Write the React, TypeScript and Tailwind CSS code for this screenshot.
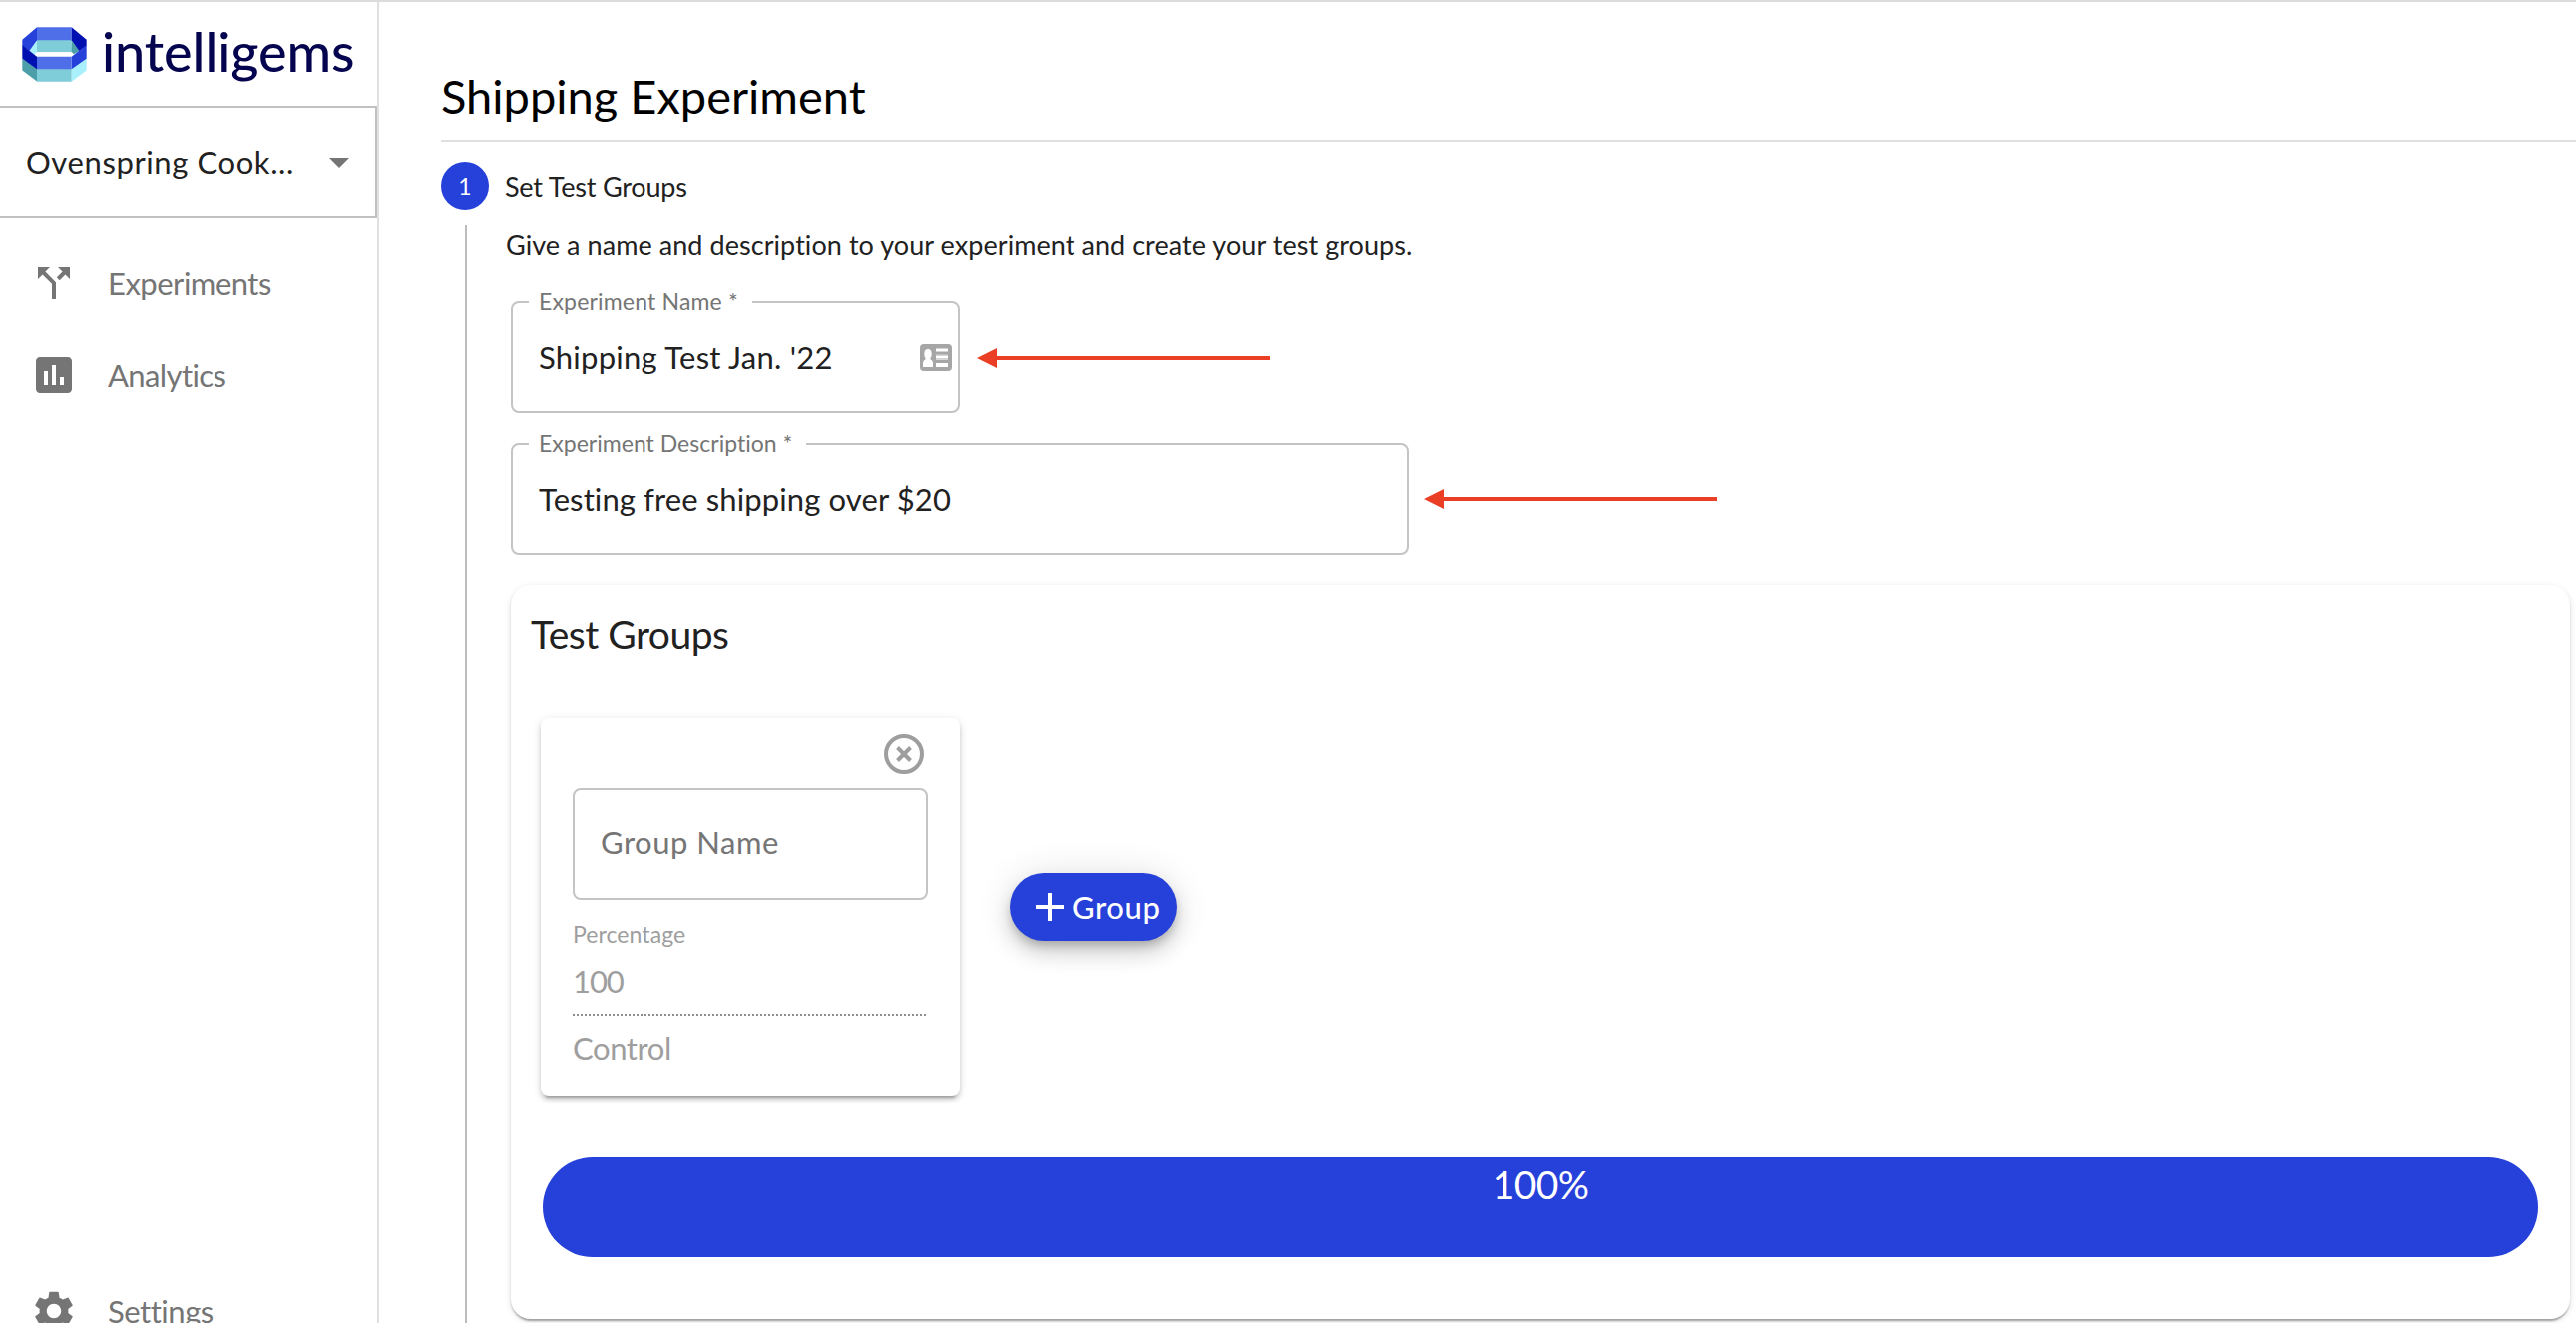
import type { ReactNode } from "react";

function Logo() {
  return (
    <svg className="block h-[55px] w-[65px] shrink-0" viewBox="67 82 195 163" preserveAspectRatio="none">
      <path fill="#4c9ea8" d="M68 176l45 30v38l-45-33z" />
      <path fill="#a8f1fc" d="M261 176l-45 30v38l45-33z" />
      <path fill="#80cdda" d="M112 205h104v39H112z" />
      <path fill="#a8f1fc" d="M112 121l-24 32 18 12 8-8z" />
      <path fill="#4c9ea8" d="M216 121l24 32-18 10-8-6z" />
      <path fill="#80cdda" d="M112 120h104v37H112z" />
      <path fill="#ffffff" d="M111 157h106l5 5-6 9H112l-6-9z" />
      <path fill="#4e6fe8" d="M112 83h104v38H112z" />
      <path fill="#2640da" d="M112 83v38l-23 32-21-15v-18z" />
      <path fill="#000fb0" d="M216 83v38l23 32 22-15v-18z" />
      <path fill="#000fb0" d="M68 136l44 34v37l-44-31z" />
      <path fill="#2640da" d="M261 136l-45 34v37l45-31z" />
      <path fill="#4e6fe8" d="M112 170h104v37H112z" />
    </svg>
  );
}

function NavItem({ path, children }: { path: string; children: ReactNode }) {
  return (
    <a className="flex h-[92px] items-center pl-[30px] text-[31px] leading-none text-[#757575]">
      <svg className="mr-[30px] h-12 w-12 shrink-0 fill-[#757575]" viewBox="0 0 24 24">
        <path d={path} />
      </svg>
      {children}
    </a>
  );
}

function Field({ label, className, children }: { label: ReactNode; className: string; children: ReactNode }) {
  return (
    <div className={`relative flex h-[112px] shrink-0 items-center rounded-lg border-2 border-[#c4c4c4] text-[31px] leading-none whitespace-nowrap text-[#212121] ${className}`}>
      {label}
      {children}
    </div>
  );
}

function Arrow() {
  return (
    <svg className="block h-5 w-[294px] shrink-0 fill-[#ea3f25]" viewBox="0 0 294 20">
      <path d="M0 10L20 0v8h274v4H20v8z" />
    </svg>
  );
}

const SPLIT = "M14 4l2.29 2.29-2.88 2.88 1.42 1.42 2.88-2.88L20 10V4zm-4 0H4v6l2.29-2.29 4.71 4.7V20h2v-8.41l-5.29-5.3z";
const CHART = "M19 3H5c-1.1 0-2 .9-2 2v14c0 1.1.9 2 2 2h14c1.1 0 2-.9 2-2V5c0-1.1-.9-2-2-2zM9 17H7v-7h2v7zm4 0h-2V7h2v10zm4 0h-2v-4h2v4z";
const GEAR = "M19.14 12.94c.04-.3.06-.61.06-.94 0-.32-.02-.64-.07-.94l2.03-1.58c.18-.14.23-.41.12-.61l-1.92-3.32c-.12-.22-.37-.29-.59-.22l-2.39.96c-.5-.38-1.03-.7-1.62-.94l-.36-2.54c-.04-.24-.24-.41-.48-.41h-3.84c-.24 0-.43.17-.47.41l-.36 2.54c-.59.24-1.13.57-1.62.94l-2.39-.96c-.22-.08-.47 0-.59.22L2.74 8.87c-.12.21-.08.47.12.61l2.03 1.58c-.05.3-.09.63-.09.94s.02.64.07.94l-2.03 1.58c-.18.14-.23.41-.12.61l1.92 3.32c.12.22.37.29.59.22l2.39-.96c.5.38 1.03.7 1.62.94l.36 2.54c.05.24.24.41.48.41h3.84c.24 0 .44-.17.47-.41l.36-2.54c.59-.24 1.13-.56 1.62-.94l2.39.96c.22.08.47 0 .59-.22l1.92-3.32c.12-.22.07-.47-.12-.61l-2.01-1.58zM12 15.6c-1.98 0-3.6-1.62-3.6-3.6s1.62-3.6 3.6-3.6 3.6 1.62 3.6 3.6-1.62 3.6-3.6 3.6z";

export default function App() {
  return (
    <div className="flex h-[1326px] w-full overflow-hidden border-t-2 border-[#dcdcdc] bg-white font-['Lato',sans-serif] text-[#212121]">
      <aside className="flex w-[380px] shrink-0 flex-col border-r-2 border-[#e0e0e0]">
        <div className="flex h-[104px] shrink-0 pt-[25px] pl-[22px]">
          <Logo />
          <span className="-mt-[5px] ml-[15px] text-[54px] leading-[60px] font-medium tracking-[-0.09px] text-[#05044f]">intelligems</span>
        </div>
        <div className="flex h-[112px] shrink-0 items-center justify-between border-y-2 border-r-2 border-[#c1c1c1] pr-3 pl-[26px] text-[31px] leading-none whitespace-nowrap">
          <span className="tracking-[0.6px]">Ovenspring Cook...</span>
          <svg className="h-12 w-12 fill-[#757575]" viewBox="0 0 24 24"><path d="M7 10l5 5 5-5z" /></svg>
        </div>
        <nav className="flex h-[1142px] shrink-0 flex-col pt-5">
          <NavItem path={SPLIT}><span className="tracking-[-0.49px]">Experiments</span></NavItem>
          <NavItem path={CHART}><span className="tracking-[-0.6px]">Analytics</span></NavItem>
          <div className="mt-auto"><NavItem path={GEAR}><span className="tracking-[-0.46px]">Settings</span></NavItem></div>
        </nav>
      </aside>

      <main className="flex min-w-0 flex-1 flex-col pl-[62px]">
        <h1 className="h-[140px] shrink-0 border-b-2 border-[#e0e0e0] pt-[64px] text-[47px] leading-[60px] text-black">Shipping Experiment</h1>
        <div className="mt-5 flex h-12 shrink-0 items-center">
          <span className="flex h-12 w-12 items-center justify-center rounded-full bg-[#2640da] text-[23px] leading-none text-white">1</span>
          <span className="ml-4 text-[27px] leading-none tracking-[-0.2px]">Set Test Groups</span>
        </div>

        <div className="mt-4 ml-6 flex h-[1100px] shrink-0 flex-col border-l-2 border-[#bdbdbd] pr-[6px] pl-11">
          <p className="-ml-[5px] h-[76px] shrink-0 text-[27px] leading-[39px] tracking-[0.06px]">
            Give a name and description to your experiment and create your test groups.
          </p>

          <div className="flex shrink-0 items-center">
            <Field
              className="w-[450px] justify-between pr-[6px] pl-[26px]"
              label={<label className="absolute -top-[18px] left-4 w-[224px] bg-white pl-[10px] text-[23px] leading-8 tracking-[0.18px] text-[#757575]">Experiment Name *</label>}
            >
              <span className="tracking-[0.26px]">Shipping Test Jan. '22</span>
              <svg className="block h-[27px] w-8" viewBox="0 0 32 27">
                <rect width="32" height="27" rx="4" fill="#a6a6a6" />
                <path fill="#fff" d="M3 23v-3.500c0-2.500 1-3.500 3-4.500-1-1.200-1.700-3-1.700-5 0-3.300 1.300-5 3.700-5s3.700 1.700 3.700 5c0 2-.7 3.800-1.700 5 2 1 3 2 3 4.500V23z" />
                <path fill="#fff" d="M16 4.500h12v3H16zM16 12h12v2.500H16zM16 19h12v4H16z" />
                <path fill="#d6d6d6" d="M16 10.500h12V12H16zM16 14.500h12V16H16z" />
              </svg>
            </Field>
            <div className="mt-[2px] ml-[17px]"><Arrow /></div>
          </div>

          <div className="mt-[30px] flex shrink-0 items-center">
            <Field
              className="w-[900px] pl-[26px]"
              label={<label className="absolute -top-[18px] left-4 w-[278px] bg-white pl-[10px] text-[23px] leading-8 tracking-[0.02px] text-[#757575]">Experiment Description *</label>}
            >
              <span className="tracking-[0.11px]">Testing free shipping over $20</span>
            </Field>
            <div className="ml-[15px]"><Arrow /></div>
          </div>

          <section className="mt-[30px] flex h-[736px] shrink-0 flex-col rounded-[20px] bg-white px-[30px] shadow-[0_4px_2px_-2px_rgba(0,0,0,0.2),0_2px_2px_rgba(0,0,0,0.14),0_2px_6px_rgba(0,0,0,0.12)]">
            <h2 className="-ml-[10px] h-[134px] shrink-0 pt-[24px] text-[39px] leading-[50px] tracking-[-0.5px]">Test Groups</h2>
            <div className="flex items-center">
              <div className="flex h-[378px] w-[420px] shrink-0 flex-col rounded-lg bg-white px-8 text-[#9e9e9e] shadow-[0_6px_2px_-4px_rgba(0,0,0,0.2),0_4px_4px_rgba(0,0,0,0.14),0_2px_10px_rgba(0,0,0,0.12)]">
                <svg className="mt-4 mr-1 block h-10 w-10 self-end" viewBox="0 0 40 40" fill="none" stroke="#9e9e9e" strokeWidth="4">
                  <circle cx="20" cy="20" r="18" />
                  <path d="M13.500 13.500l13 13M26.500 13.500l-13 13" strokeWidth="4" />
                </svg>
                <div className="mt-[14px] h-[112px] shrink-0 rounded-lg border-2 border-[#c4c4c4] pl-[26px] text-[31px] leading-[104px] tracking-[0.52px] text-[#757575]">Group Name</div>
                <span className="mt-[18px] text-[23px] leading-8 tracking-[0.08px]">Percentage</span>
                <span className="mt-[11px] text-[31px] leading-10 tracking-[-1.1px]">100</span>
                <svg className="mt-[13px] block h-[2px] w-[356px] shrink-0" viewBox="0 0 356 2">
                  <path d="M0 1h356" stroke="#8e8e8e" strokeWidth="2" strokeDasharray="2 2" />
                </svg>
                <span className="mt-[12px] text-[31px] leading-10 tracking-[-0.4px]">Control</span>
              </div>
              <button className="ml-[50px] flex h-[68px] w-[168px] items-center rounded-full bg-[#2640da] pl-[26px] text-[31px] leading-none font-medium text-white shadow-[0_6px_10px_-2px_rgba(0,0,0,0.2),0_12px_20px_rgba(0,0,0,0.14),0_2px_36px_rgba(0,0,0,0.12)]">
                <svg className="mr-[9px] block h-7 w-7" viewBox="0 0 28 28" stroke="#fff" strokeWidth="4"><path d="M14 0v28M0 14h28" /></svg>
                <span className="tracking-[0.6px]">Group</span>
              </button>
            </div>
            <div className="mt-[62px] ml-[2px] h-[100px] w-[2000px] shrink-0 rounded-full bg-[#2640da] pt-[2px] text-center text-[39px] leading-[50px] tracking-[-0.62px] text-white">100%</div>
          </section>
        </div>
      </main>
    </div>
  );
}
